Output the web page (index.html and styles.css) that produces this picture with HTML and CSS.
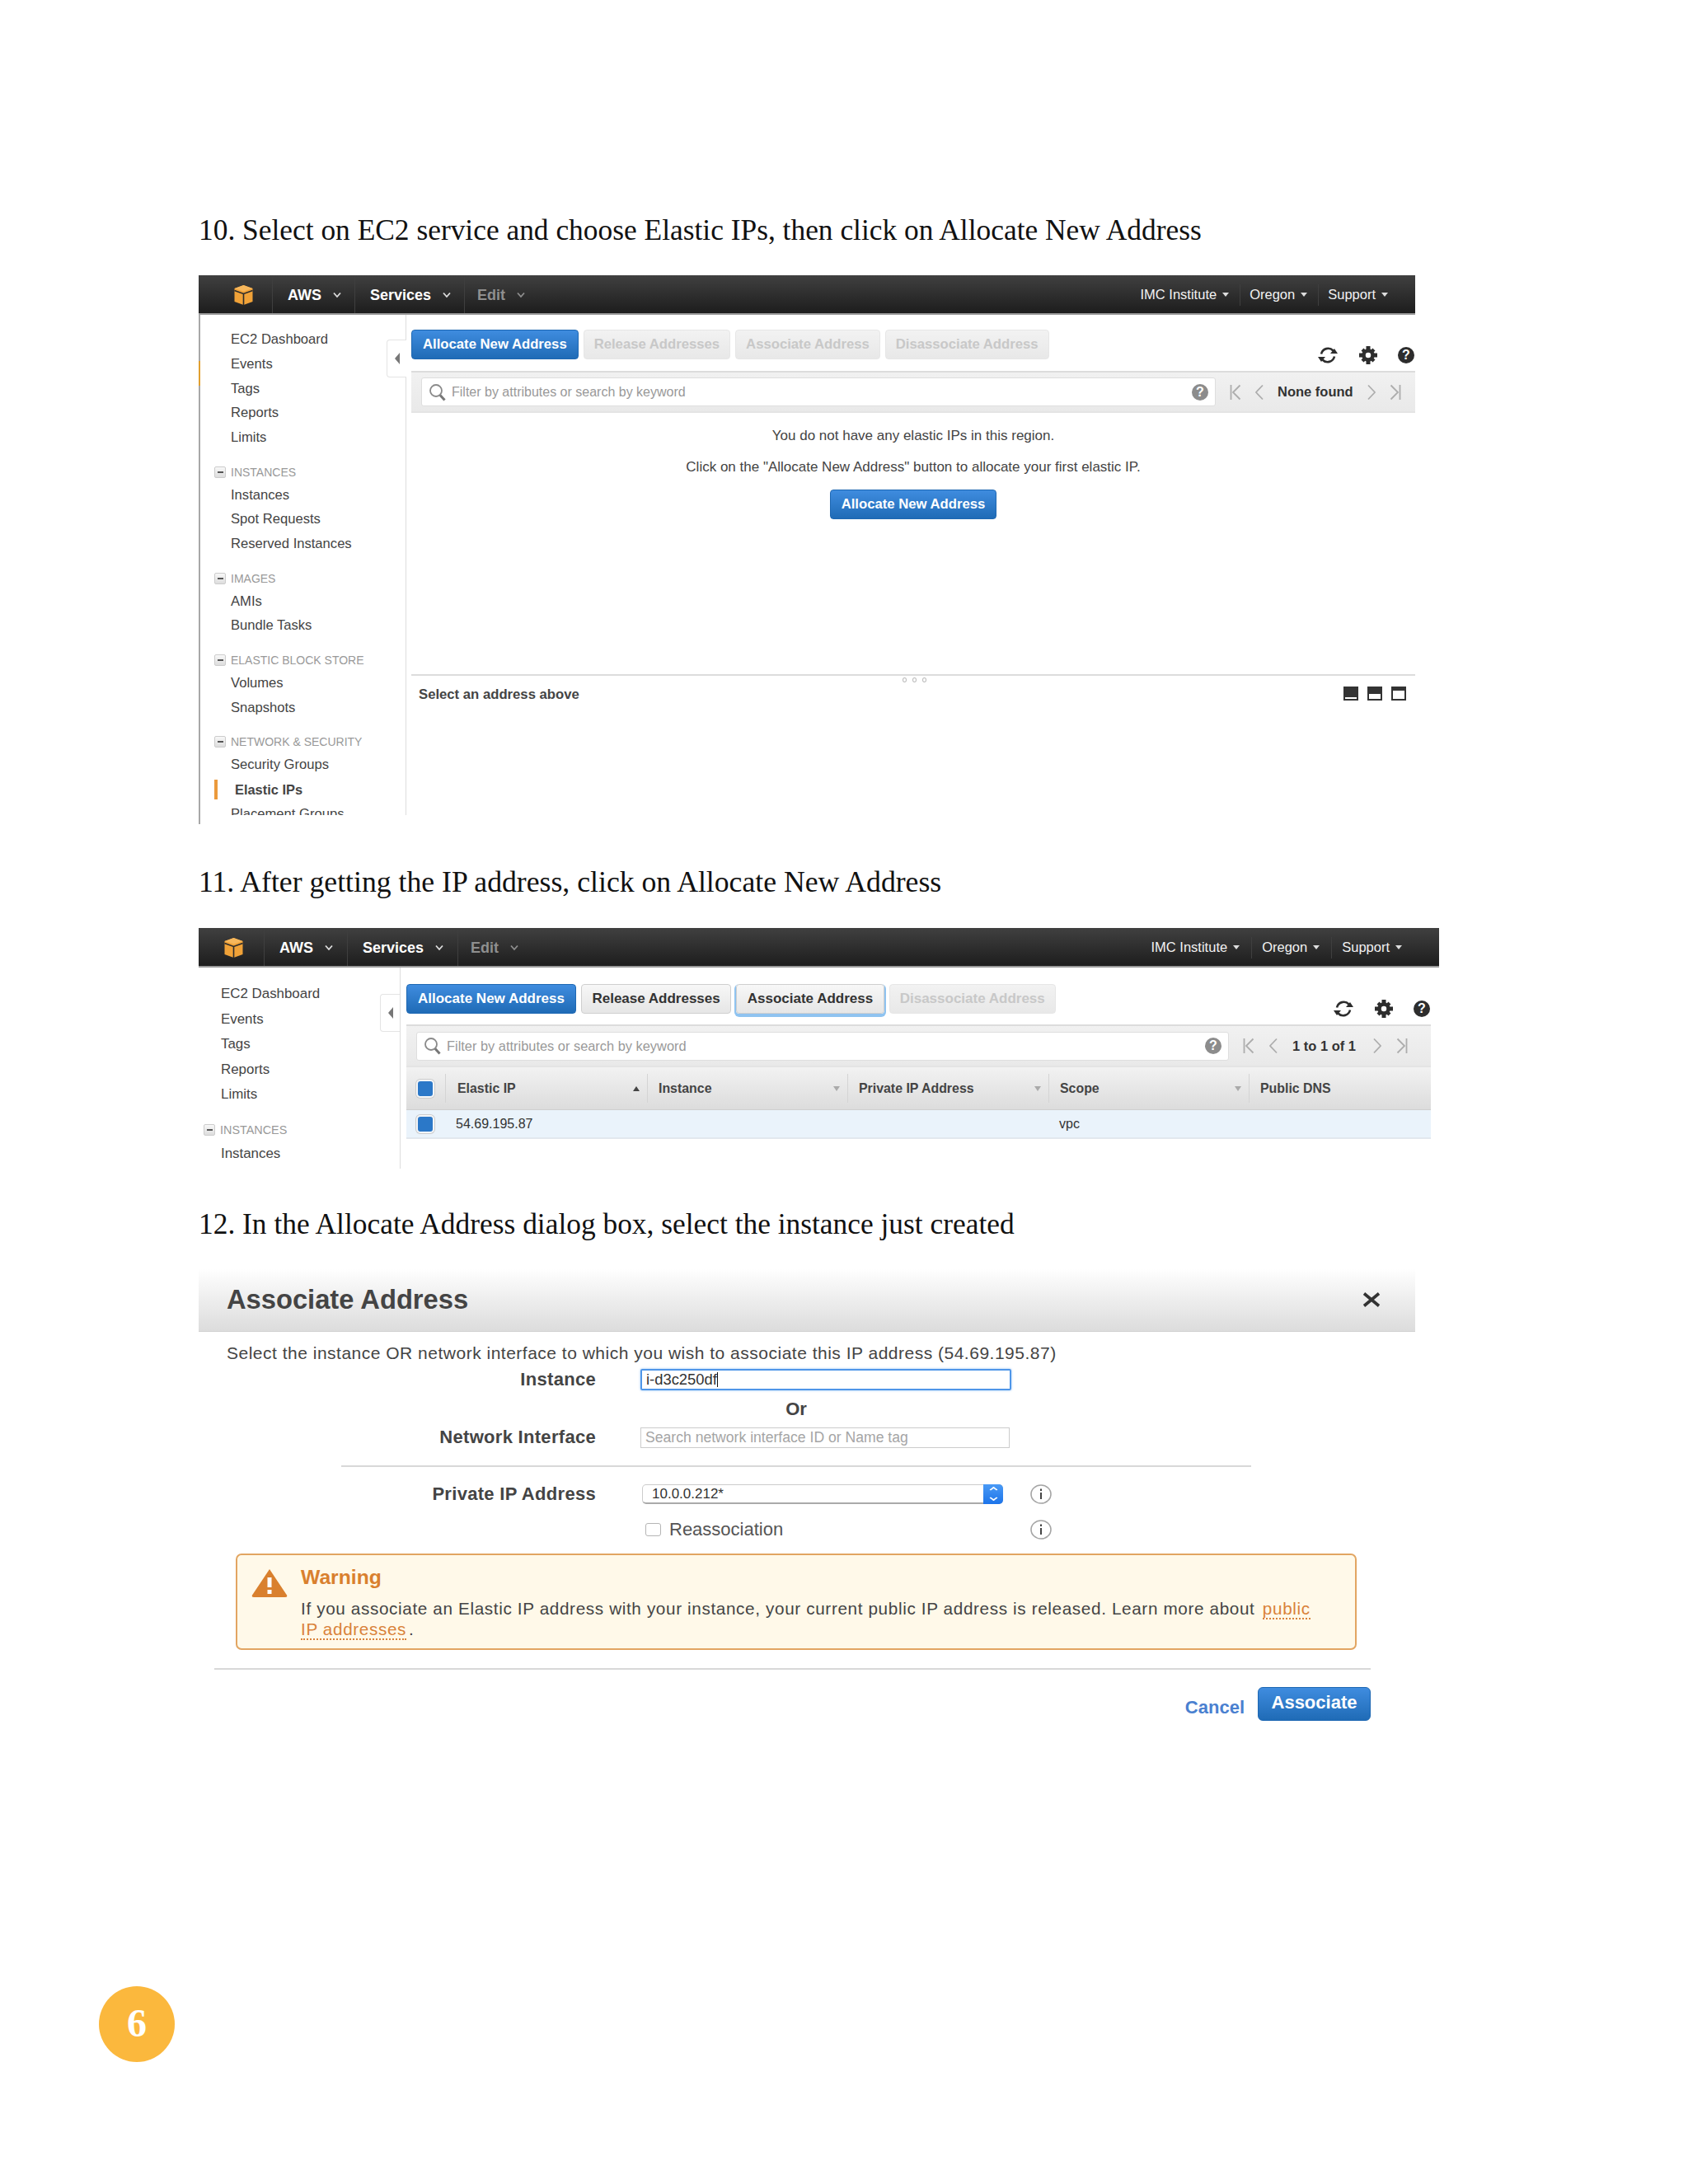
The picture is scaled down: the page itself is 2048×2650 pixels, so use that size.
FILE: index.html
```html
<!DOCTYPE html>
<html lang="en">
  <head>
    <meta charset="UTF-8" />
    <meta name="viewport" content="width=device-width, initial-scale=1.0" />
    <title>Elastic IP setup</title>
    <link rel="stylesheet" href="styles.css">
  </head>
  <body>
    <svg class="icon-defs" aria-hidden="true">
      <symbol id="i-logo" viewBox="0 0 25 24">
        <path d="M12.5 0 23.500 4v16l-11 4-11-4V4z" fill="#f0a238"/>
        <path d="M12.500 0 23.500 4l-11 3.500L1.500 4z" fill="#f6b75c"/>
        <path d="M1.500 6.500l11 4 11-4M12.500 10.500V24" fill="none" stroke="#2b2b2b" stroke-width="1.600"/>
      </symbol>
      <symbol id="i-chev" viewBox="0 0 10 8">
        <path d="M1 1.500 5 6l4-4.500" fill="none" stroke="currentColor" stroke-width="1.800"/>
      </symbol>
      <symbol id="i-refresh" viewBox="0 0 26 24">
        <path d="M5 10.500A8.500 8.500 0 0 1 19.500 6.500M21 13.500A8.500 8.500 0 0 1 6.500 17.500" fill="none" stroke="#2d2d2d" stroke-width="2.600"/>
        <path d="M16 10h9l-4-6zM1 14h9l-5 6z" fill="#2d2d2d"/>
      </symbol>
      <symbol id="i-gear" viewBox="0 0 22 22">
        <circle cx="11" cy="11" r="5.500" fill="none" stroke="#2d2d2d" stroke-width="4.500"/>
        <path d="M8.500 0h5v4h-5zM8.500 18h5v4h-5zM0 8.500h4v5H0zM18 8.500h4v5h-4zM2.500 5.500 5.500 2.500l3 3-3 3zM16.500 2.500l3 3-3 3-3-3zM2.500 16.500l3-3 3 3-3 3zM16.500 13.500l3 3-3 3-3-3z" fill="#2d2d2d"/>
      </symbol>
      <symbol id="i-search" viewBox="0 0 22 22">
        <circle cx="9" cy="9" r="7" fill="none" stroke="#8a8a8a" stroke-width="1.800"/>
        <path d="m14 14.500 5.500 6" fill="none" stroke="#777" stroke-width="3"/>
      </symbol>
      <symbol id="i-first" viewBox="0 0 14 20">
        <path d="M1.500 1v18M12.500 1.500 4 10l8.500 8.500" fill="none" stroke="#adadad" stroke-width="1.800"/>
      </symbol>
      <symbol id="i-prev" viewBox="0 0 10 20">
        <path d="M9 1.500.9 10 9 18.500" fill="none" stroke="#adadad" stroke-width="1.800"/>
      </symbol>
      <symbol id="i-next" viewBox="0 0 10 20">
        <path d="M1 1.500 9.100 10 1 18.500" fill="none" stroke="#adadad" stroke-width="1.800"/>
      </symbol>
      <symbol id="i-last" viewBox="0 0 14 20">
        <path d="M12.500 1v18M1.500 1.500 10 10l-8.500 8.500" fill="none" stroke="#adadad" stroke-width="1.800"/>
      </symbol>
      <symbol id="i-info" viewBox="0 0 26 24">
        <ellipse cx="13" cy="12" rx="12" ry="11" fill="#fff" stroke="#a5a5a5" stroke-width="1.600"/>
        <path d="M13 10v8M13 5.500v2.500" fill="none" stroke="#444" stroke-width="2"/>
      </symbol>
      <symbol id="i-warn" viewBox="0 0 44 36">
        <path d="M22 1 43 32.500q1 2.500-2 2.500H3q-3 0-2-2.500z" fill="#d9802e"/>
        <path d="M19.500 11h5v12h-5zM19.500 26h5v5h-5z" fill="#fff"/>
      </symbol>
      <symbol id="i-close" viewBox="0 0 22 18">
        <path d="M2 1.500 20 16.500M20 1.500 2 16.500" fill="none" stroke="#333" stroke-width="3.600"/>
      </symbol>
    </svg>

    <p class="step">10. Select on EC2 service and choose Elastic IPs, then click on Allocate New Address</p>

    <section class="shot shot-one">
      <nav class="topbar">
        <svg class="logo"><use href="#i-logo"/></svg>
        <span class="menu">AWS <svg class="chev"><use href="#i-chev"/></svg></span>
        <span class="menu">Services <svg class="chev"><use href="#i-chev"/></svg></span>
        <span class="menu muted">Edit <svg class="chev"><use href="#i-chev"/></svg></span>
        <div class="topbar-right">
          <span class="acct">IMC Institute <i class="tri"></i></span>
          <span class="acct">Oregon <i class="tri"></i></span>
          <span class="acct">Support <i class="tri"></i></span>
        </div>
      </nav>
      <div class="console has-edge">
        <i class="edge-mark"></i>
        <aside class="sidebar">
          <a class="sb-item">EC2 Dashboard</a>
          <a class="sb-item">Events</a>
          <a class="sb-item">Tags</a>
          <a class="sb-item">Reports</a>
          <a class="sb-item">Limits</a>
          <div class="sb-head"><i class="minus"></i>INSTANCES</div>
          <a class="sb-item">Instances</a>
          <a class="sb-item">Spot Requests</a>
          <a class="sb-item">Reserved Instances</a>
          <div class="sb-head"><i class="minus"></i>IMAGES</div>
          <a class="sb-item">AMIs</a>
          <a class="sb-item">Bundle Tasks</a>
          <div class="sb-head"><i class="minus"></i>ELASTIC BLOCK STORE</div>
          <a class="sb-item">Volumes</a>
          <a class="sb-item">Snapshots</a>
          <div class="sb-head"><i class="minus"></i>NETWORK &amp; SECURITY</div>
          <a class="sb-item">Security Groups</a>
          <a class="sb-item active">Elastic IPs</a>
          <a class="sb-item">Placement Groups</a>
        </aside>
        <div class="main">
          <div class="collapse-tab"><i></i></div>
          <div class="toolbar">
            <button class="btn primary">Allocate New Address</button>
            <button class="btn off">Release Addresses</button>
            <button class="btn off">Associate Address</button>
            <button class="btn off">Disassociate Address</button>
            <div class="tool-icons">
              <svg class="ic-refresh"><use href="#i-refresh"/></svg>
              <svg class="ic-gear"><use href="#i-gear"/></svg>
              <span class="help-dot">?</span>
            </div>
          </div>
          <div class="filterbar">
            <div class="filter-input">
              <svg class="ic-search"><use href="#i-search"/></svg>
              <span class="filter-text">Filter by attributes or search by keyword</span>
              <span class="help-dot grey">?</span>
            </div>
            <div class="pager">
              <svg class="pg-wide"><use href="#i-first"/></svg>
              <svg class="pg-thin"><use href="#i-prev"/></svg>
              <b class="pg-text">None found</b>
              <svg class="pg-thin"><use href="#i-next"/></svg>
              <svg class="pg-wide"><use href="#i-last"/></svg>
            </div>
          </div>
          <div class="empty">
            <p>You do not have any elastic IPs in this region.</p>
            <p>Click on the "Allocate New Address" button to allocate your first elastic IP.</p>
            <button class="btn primary">Allocate New Address</button>
          </div>
          <div class="details">
            <div class="grip"><i></i><i></i><i></i></div>
            <b>Select an address above</b>
            <div class="pane-icons">
              <i class="pane p-low"></i>
              <i class="pane p-mid"></i>
              <i class="pane p-high"></i>
            </div>
          </div>
        </div>
      </div>
    </section>

    <p class="step step-two">11. After getting the IP address, click on Allocate New Address</p>

    <section class="shot shot-two">
      <nav class="topbar">
        <svg class="logo"><use href="#i-logo"/></svg>
        <span class="menu">AWS <svg class="chev"><use href="#i-chev"/></svg></span>
        <span class="menu">Services <svg class="chev"><use href="#i-chev"/></svg></span>
        <span class="menu muted">Edit <svg class="chev"><use href="#i-chev"/></svg></span>
        <div class="topbar-right">
          <span class="acct">IMC Institute <i class="tri"></i></span>
          <span class="acct">Oregon <i class="tri"></i></span>
          <span class="acct">Support <i class="tri"></i></span>
        </div>
      </nav>
      <div class="console">
        <aside class="sidebar">
          <a class="sb-item">EC2 Dashboard</a>
          <a class="sb-item">Events</a>
          <a class="sb-item">Tags</a>
          <a class="sb-item">Reports</a>
          <a class="sb-item">Limits</a>
          <div class="sb-head"><i class="minus"></i>INSTANCES</div>
          <a class="sb-item">Instances</a>
        </aside>
        <div class="main">
          <div class="collapse-tab"><i></i></div>
          <div class="toolbar">
            <button class="btn primary">Allocate New Address</button>
            <button class="btn plain">Release Addresses</button>
            <button class="btn plain focus">Associate Address</button>
            <button class="btn off">Disassociate Address</button>
            <div class="tool-icons">
              <svg class="ic-refresh"><use href="#i-refresh"/></svg>
              <svg class="ic-gear"><use href="#i-gear"/></svg>
              <span class="help-dot">?</span>
            </div>
          </div>
          <div class="filterbar">
            <div class="filter-input">
              <svg class="ic-search"><use href="#i-search"/></svg>
              <span class="filter-text">Filter by attributes or search by keyword</span>
              <span class="help-dot grey">?</span>
            </div>
            <div class="pager">
              <svg class="pg-wide"><use href="#i-first"/></svg>
              <svg class="pg-thin"><use href="#i-prev"/></svg>
              <b class="pg-text">1 to 1 of 1</b>
              <svg class="pg-thin"><use href="#i-next"/></svg>
              <svg class="pg-wide"><use href="#i-last"/></svg>
            </div>
          </div>
          <div class="table-row table-head">
            <div class="cell check-cell"><i class="check"></i></div>
            <div class="cell">Elastic IP<i class="sort up"></i></div>
            <div class="cell">Instance<i class="sort"></i></div>
            <div class="cell">Private IP Address<i class="sort"></i></div>
            <div class="cell">Scope<i class="sort"></i></div>
            <div class="cell">Public DNS</div>
          </div>
          <div class="table-row table-data">
            <div class="cell check-cell"><i class="check"></i></div>
            <div class="cell">54.69.195.87</div>
            <div class="cell"></div>
            <div class="cell"></div>
            <div class="cell">vpc</div>
            <div class="cell"></div>
          </div>
        </div>
      </div>
    </section>

    <p class="step step-three">12. In the Allocate Address dialog box, select the instance just created</p>

    <section class="shot dialog">
      <header class="dialog-head">
        <h2>Associate Address</h2>
        <svg class="ic-close"><use href="#i-close"/></svg>
      </header>
      <p class="dialog-desc">Select the instance OR network interface to which you wish to associate this IP address (54.69.195.87)</p>

      <div class="form-row row-instance">
        <label class="form-label">Instance</label>
        <div class="text-field focused">i-d3c250df<i class="cursor"></i></div>
      </div>
      <div class="form-or">Or</div>
      <div class="form-row row-network">
        <label class="form-label">Network Interface</label>
        <div class="text-field placeholder">Search network interface ID or Name tag</div>
      </div>
      <hr class="rule rule-form" />
      <div class="form-row row-ip">
        <label class="form-label">Private IP Address</label>
        <div class="form-control">
          <div class="select">
            <span>10.0.0.212*</span>
            <span class="stepper"><i></i><i></i></span>
          </div>
          <svg class="ic-info"><use href="#i-info"/></svg>
        </div>
      </div>
      <div class="form-row row-reassoc">
        <span class="form-label"></span>
        <div class="form-control">
          <label class="reassoc"><i class="box"></i>Reassociation</label>
          <svg class="ic-info"><use href="#i-info"/></svg>
        </div>
      </div>

      <div class="warning">
        <svg class="ic-warn"><use href="#i-warn"/></svg>
        <div class="warning-body">
          <h3>Warning</h3>
          <p>If you associate an Elastic IP address with your instance, your current public IP address is released. Learn more about <a>public IP addresses</a>.</p>
        </div>
      </div>

      <hr class="rule rule-foot" />
      <footer class="dialog-foot">
        <a class="cancel">Cancel</a>
        <button class="btn primary assoc">Associate</button>
      </footer>
    </section>

    <div class="page-badge">6</div>
  </body>
</html>
```

FILE: styles.css
```css
* {
  padding: 0;
  margin: 0;
  box-sizing: border-box;
}

body {
  background: #fff;
  font-family: "Liberation Sans", Arial, sans-serif;
  color: #444;
  height: 2650px;
  overflow: hidden;
}

i {
  display: block;
}

svg {
  display: block;
  flex: none;
}

.icon-defs {
  position: absolute;
  width: 0;
  height: 0;
}

/* headings between the screenshots */
.step {
  font-family: "Liberation Serif", "Times New Roman", serif;
  font-size: 35.400px;
  line-height: 48px;
  color: #111;
  margin: 255px 0 31px 241px;
}

.step-two {
  font-size: 35.700px;
  margin-top: 46px;
  margin-bottom: 32px;
}

.step-three {
  margin-top: 43px;
  margin-bottom: 30px;
}

.shot {
  margin-left: 241px;
}

.shot-one {
  width: 1476px;
}

.shot-two {
  width: 1505px;
}

/* top bar */
.topbar {
  height: 48px;
  padding-top: 2px;
  display: flex;
  align-items: center;
  background: linear-gradient(#404040, #1d1d1d);
  border-bottom: 2px solid #9a9a9a;
  color: #fff;
}

.logo {
  width: 25px;
  height: 24px;
  margin-left: 42px;
  margin-right: 22px;
}

.shot-two .logo {
  margin-left: 30px;
  margin-right: 24px;
}

.menu {
  height: 100%;
  display: flex;
  align-items: center;
  gap: 14px;
  padding: 0 16px 0 18px;
  font-size: 18px;
  font-weight: bold;
  border-left: 1px solid #3f3f3f;
}

.shot-two .menu {
  padding-right: 17px;
}

.menu.muted {
  color: #8f8f8f;
  padding-left: 15px;
}

.chev {
  width: 10px;
  height: 8px;
  color: #ddd;
}

.muted .chev {
  color: #8f8f8f;
}

.topbar-right {
  margin-left: auto;
  height: 100%;
  display: flex;
  align-items: center;
  padding-right: 33px;
}

.shot-two .topbar-right {
  padding-right: 45px;
}

.acct {
  height: 60%;
  display: flex;
  align-items: center;
  gap: 7px;
  padding: 0 13px 0 11px;
  font-size: 16.500px;
  color: #f2f2f2;
  border-left: 1px solid #3f3f3f;
}

.shot-two .acct {
  padding: 0 14px 0 12px;
}

.acct:first-child {
  border-left: none;
}

.acct:last-child,
.shot-two .acct:last-child {
  padding-right: 0;
}

.tri {
  border-top: 5px solid #ddd;
  border-left: 4px solid transparent;
  border-right: 4px solid transparent;
}

/* console: sidebar and main column */
.console {
  display: flex;
  align-items: flex-start;
  position: relative;
}

.has-edge {
  height: 618px;
  border-left: 2px solid #a8a8a8;
}

.edge-mark {
  position: absolute;
  left: -2px;
  top: 56px;
  width: 2px;
  height: 30px;
  background: #e0a030;
}

.sidebar {
  width: 250px;
  height: 607px;
  overflow: hidden;
  border-right: 1px solid #ddd;
  padding-top: 15px;
  flex: none;
}

.sb-item {
  display: block;
  height: 29.800px;
  line-height: 29.800px;
  padding-left: 37px;
  font-size: 16.600px;
  color: #444;
}

.sb-item.active {
  height: 24px;
  line-height: 24px;
  margin: 3px 0;
  margin-left: 17px;
  padding-left: 21px;
  border-left: 4px solid #eb9a3c;
  font-weight: bold;
  font-size: 16.400px;
}

.sb-head {
  height: 26px;
  margin-top: 13.600px;
  padding-left: 17px;
  display: flex;
  align-items: center;
  gap: 6px;
  font-size: 14px;
  color: #999;
}

.minus {
  width: 14px;
  height: 14px;
  border: 1px solid #ccc;
  border-radius: 2px;
  background: linear-gradient(#f8f8f8, #ddd);
  display: flex;
  align-items: center;
  justify-content: center;
}

.minus::after {
  content: "";
  width: 7px;
  height: 2px;
  background: #555;
}

.main {
  flex: 1;
  margin-left: 6px;
  position: relative;
}

.collapse-tab {
  position: absolute;
  left: -30px;
  top: 30px;
  width: 24px;
  height: 46px;
  background: #fff;
  border: 1px solid #e4e4e4;
  border-right: none;
  border-radius: 4px 0 0 4px;
  display: flex;
  align-items: center;
  justify-content: center;
}

.collapse-tab i {
  border-right: 6px solid #777;
  border-top: 7px solid transparent;
  border-bottom: 7px solid transparent;
}

/* buttons */
.btn {
  height: 36px;
  padding: 0 13px;
  font-family: inherit;
  font-size: 16.700px;
  font-weight: bold;
  border-radius: 4px;
  border: 1px solid #ccc;
}

.btn.primary {
  color: #fff;
  background: linear-gradient(#3f8cdf, #1f6bb6);
  border-color: #1e68b3;
}

.btn.off {
  padding: 0 12px;
  color: #c8c8c8;
  background: linear-gradient(#f2f2f2, #e8e8e8);
  border-color: #e6e6e6;
}

.btn.plain {
  padding: 0 12.500px;
  color: #333;
  background: linear-gradient(#f7f7f7, #e6e6e6);
  border-color: #cfcfcf;
}

.btn.focus {
  box-shadow: 0 2px 0 2px #8fc3f0;
}

.toolbar {
  display: flex;
  align-items: flex-start;
  gap: 6px;
  padding-top: 18px;
  height: 68px;
}

.tool-icons {
  margin-left: auto;
  margin-top: 19px;
  padding-right: 1px;
  display: flex;
  align-items: center;
  gap: 25px;
}

.ic-refresh {
  width: 26px;
  height: 24px;
}

.ic-gear {
  width: 22px;
  height: 22px;
}

.help-dot {
  width: 20px;
  height: 20px;
  border-radius: 50%;
  background: #2d2d2d;
  color: #fff;
  font-size: 16px;
  font-weight: bold;
  line-height: 20px;
  text-align: center;
  flex: none;
}

.help-dot.grey {
  background: #8c8c8c;
}

/* filter bar */
.filterbar {
  height: 51px;
  display: flex;
  align-items: center;
  padding-left: 12px;
  border-top: 2px solid #dcdcdc;
  border-bottom: 2px solid #e4e4e4;
  background: linear-gradient(#f1f1f1, #e9e9e9);
}

.filter-input {
  flex: 1;
  height: 35px;
  display: flex;
  align-items: center;
  gap: 6px;
  padding: 0 8px;
  background: #fff;
  border: 1px solid #dedede;
  border-radius: 3px;
  font-size: 16px;
  color: #999;
}

.ic-search {
  width: 22px;
  height: 22px;
}

.filter-text {
  flex: 1;
}

.pager {
  width: 242px;
  flex: none;
  display: flex;
  align-items: center;
  gap: 17px;
  padding-left: 17px;
}

.pg-wide {
  width: 14px;
  height: 20px;
}

.pg-thin {
  width: 10px;
  height: 20px;
}

.pg-text {
  font-size: 16.500px;
  color: #333;
  white-space: nowrap;
}

/* empty state */
.empty {
  height: 317px;
  padding-top: 16px;
  display: flex;
  flex-direction: column;
  align-items: center;
  font-size: 17px;
  line-height: 24px;
  color: #444;
}

.empty p {
  margin-bottom: 14px;
}

.empty .btn {
  margin-top: 1px;
}

.details {
  position: relative;
  display: flex;
  justify-content: space-between;
  padding: 13px 11px 0 9px;
  border-top: 2px solid #dcdcdc;
  font-size: 16.700px;
  line-height: 20px;
  color: #444;
}

.grip {
  position: absolute;
  left: 596px;
  top: 2px;
  display: flex;
  gap: 7px;
}

.grip i {
  width: 5px;
  height: 6px;
  border-radius: 50%;
  border: 1px solid #bbb;
}

.pane-icons {
  display: flex;
  gap: 11px;
}

.pane {
  width: 18px;
  height: 17px;
  background: #333;
  position: relative;
}

.pane::after {
  content: "";
  position: absolute;
  left: 2px;
  right: 2px;
  background: #fff;
}

.p-low::after {
  bottom: 2px;
  height: 2px;
}

.p-mid::after {
  bottom: 2px;
  height: 6px;
}

.p-high::after {
  bottom: 2px;
  height: 10px;
}

/* second screenshot differs a little in scale */
.shot-two .console {
  height: 244px;
}

.shot-two .sidebar {
  width: 245px;
  height: 244px;
  padding-top: 17px;
}

.shot-two .sb-item {
  height: 30.500px;
  line-height: 30.500px;
  padding-left: 27px;
  font-size: 16.900px;
}

.shot-two .sb-head {
  padding-left: 6px;
  margin-top: 14px;
  height: 27px;
  gap: 6px;
  font-size: 14.400px;
}

.shot-two .main {
  margin-left: 7px;
  margin-right: 10px;
}

.shot-two .collapse-tab {
  left: -32px;
  top: 32px;
}

.shot-two .toolbar {
  padding-top: 20px;
  height: 69px;
}

.shot-two .tool-icons {
  margin-top: 18px;
}

.shot-two .btn {
  font-size: 17px;
}

.shot-two .filterbar {
  height: 52px;
}

.shot-two .filter-input {
  font-size: 16.400px;
}

.shot-two .pager {
  width: 245px;
  gap: 18px;
}

.shot-two .pg-text {
  width: 80px;
}

/* table */
.table-row {
  display: grid;
  grid-template-columns: 47px 245px 243px 244px 243px 1fr;
}

.table-head {
  height: 52px;
  background: linear-gradient(#f2f2f2, #dcdcdc);
  border-bottom: 1px solid #cfcfcf;
  font-size: 15.900px;
  font-weight: bold;
  color: #444;
}

.table-data {
  height: 35px;
  background: #eaf3fb;
  border-bottom: 2px solid #e2e8ee;
  font-size: 16px;
  color: #333;
}

.cell {
  display: flex;
  align-items: center;
  padding: 0 9px 0 13px;
}

.table-head .cell {
  margin: 8px 0;
  border-left: 1px solid #d4d4d4;
}

.table-head .check-cell {
  border-left: none;
}

.table-head .cell:nth-child(2) {
  padding-left: 14px;
}

.check-cell {
  padding: 0 0 0 14px;
}

.check {
  width: 18px;
  height: 18px;
  border-radius: 3px;
  background: #2b78c8;
  box-shadow: 0 0 0 2px #f4f6f8, 0 0 0 3px #ccc;
}

.sort {
  margin-left: auto;
  border-top: 6px solid #aaa;
  border-left: 4px solid transparent;
  border-right: 4px solid transparent;
}

.sort.up {
  border-top: none;
  border-bottom: 6px solid #444;
}

/* dialog */
.dialog {
  width: 1476px;
}

.dialog-head {
  height: 77px;
  display: flex;
  align-items: center;
  justify-content: space-between;
  padding: 0 42px 0 34px;
  background: linear-gradient(#fff, #dcdcdc);
  border-bottom: 1px solid #d0d0d0;
}

.dialog-head h2 {
  font-size: 32.700px;
  color: #444;
}

.ic-close {
  width: 22px;
  height: 18px;
}

.dialog-desc {
  margin: 13px 0 0 34px;
  height: 26px;
  line-height: 26px;
  font-size: 21px;
  letter-spacing: 0.500px;
  color: #444;
}

.form-row {
  display: flex;
  align-items: center;
}

.form-label {
  width: 482px;
  margin-right: 54px;
  text-align: right;
  font-size: 22px;
  font-weight: bold;
  letter-spacing: 0.300px;
  line-height: 28px;
  color: #444;
  flex: none;
}

.row-instance {
  height: 26px;
  margin-top: 6px;
}

.text-field {
  width: 450px;
  height: 26px;
  display: flex;
  align-items: center;
  padding-left: 5px;
  font-size: 18.400px;
  color: #333;
}

.text-field.focused {
  border: 2px solid #4f96e8;
  box-shadow: 0 0 3px #8fc0f5;
  border-radius: 2px;
}

.cursor {
  width: 1px;
  height: 18px;
  background: #111;
}

.text-field.placeholder {
  width: 448px;
  height: 25px;
  border: 1px solid #ccc;
  font-size: 17.600px;
  color: #a5a5a5;
}

.form-or {
  height: 22px;
  line-height: 22px;
  margin: 12px 0 0 536px;
  width: 378px;
  text-align: center;
  font-size: 22px;
  font-weight: bold;
}

.row-network {
  margin-top: 9px;
}

.rule {
  border: none;
  border-top: 2px solid #d8d8d8;
}

.rule-form {
  margin: 20px 0 0 173px;
  width: 1104px;
}

.form-control {
  width: 499px;
  display: flex;
  align-items: center;
  justify-content: space-between;
}

.row-ip {
  margin-top: 19px;
}

.select {
  width: 438px;
  height: 24px;
  margin-left: 2px;
  padding-left: 11px;
  display: flex;
  align-items: center;
  justify-content: space-between;
  border: 1px solid #ccc;
  border-bottom: 2px solid #aaa;
  border-radius: 5px;
  font-size: 17px;
  color: #333;
}

.stepper {
  width: 24px;
  height: 24px;
  margin-right: -1px;
  border-radius: 0 5px 5px 0;
  background: linear-gradient(#4a9af5, #1c74ea);
  display: flex;
  flex-direction: column;
  align-items: center;
  justify-content: center;
  gap: 3px;
}

.stepper i {
  width: 7px;
  height: 7px;
  border-left: 2px solid #fff;
  border-top: 2px solid #fff;
  transform: scaleY(0.700) rotate(45deg);
}

.stepper i:last-child {
  transform: scaleY(0.700) rotate(225deg);
}

.ic-info {
  width: 26px;
  height: 24px;
}

.row-reassoc {
  margin-top: 16px;
}

.reassoc {
  display: flex;
  align-items: center;
  gap: 10px;
  margin-left: 6px;
  font-size: 22px;
  color: #555;
}

.box {
  width: 19px;
  height: 16px;
  border: 1px solid #b5b5b5;
  border-radius: 3px;
  background: #fff;
}

.warning {
  width: 1360px;
  height: 117px;
  margin: 16px 0 0 45px;
  padding: 16px 44px 0 17px;
  display: flex;
  gap: 16px;
  background: #fff9e9;
  border: 2px solid #e2a562;
  border-radius: 7px;
}

.ic-warn {
  width: 44px;
  height: 36px;
}

.warning-body h3 {
  font-size: 24.700px;
  line-height: 22px;
  color: #d9802e;
}

.warning-body p {
  margin-top: 14px;
  font-size: 20.700px;
  line-height: 25px;
  letter-spacing: 0.640px;
  color: #444;
}

.warning-body a {
  margin: 0 3px;
  color: #d9823a;
  border-bottom: 2px dotted #d9823a;
}

.rule-foot {
  margin: 22px 0 0 19px;
  width: 1403px;
}

.dialog-foot {
  width: 1422px;
  margin-top: 21px;
  display: flex;
  justify-content: flex-end;
  gap: 16px;
}

.cancel {
  margin-top: 12px;
  font-size: 22px;
  font-weight: bold;
  color: #4a80d0;
}

.btn.assoc {
  width: 137px;
  height: 41px;
  padding: 0;
  font-size: 22px;
  padding-bottom: 3px;
  border-radius: 6px;
}

/* page number */
.page-badge {
  width: 92px;
  height: 92px;
  margin: 322px 0 0 120px;
  border-radius: 50%;
  background: #fbb83d;
  color: #fff;
  font-family: "Liberation Serif", serif;
  font-size: 48px;
  font-weight: bold;
  line-height: 90px;
  text-align: center;
}
```
